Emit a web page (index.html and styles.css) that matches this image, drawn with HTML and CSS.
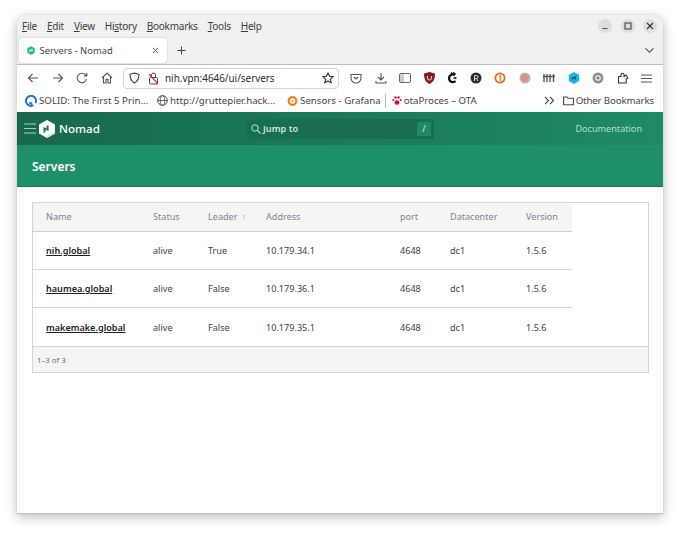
FILE: index.html
```html
<!DOCTYPE html>
<html lang="en">
<head>
    <meta charset="UTF-8">
    <title>Servers - Nomad</title>
    <link rel="stylesheet" href="styles.css">
</head>
<body>
    <div class="window">
        <div class="menubar">
            <div class="menus">
                <span><u>F</u>ile</span>
                <span><u>E</u>dit</span>
                <span><u>V</u>iew</span>
                <span>Hi<u>s</u>tory</span>
                <span><u>B</u>ookmarks</span>
                <span><u>T</u>ools</span>
                <span><u>H</u>elp</span>
            </div>
            <div class="winbtns">
                <span class="winbtn"><svg width="8" height="8" viewBox="0 0 8 8"><path d="M1.500 6.500h5" stroke="#555" stroke-width="1.100"/></svg></span>
                <span class="winbtn"><svg width="8" height="8" viewBox="0 0 8 8"><rect x="1" y="1" width="6" height="6" fill="none" stroke="#444" stroke-width="1.100"/></svg></span>
                <span class="winbtn"><svg width="8" height="8" viewBox="0 0 8 8"><path d="M1 1l6 6M7 1L1 7" stroke="#333" stroke-width="1.200"/></svg></span>
            </div>
        </div>

        <div class="tabbar">
            <div class="tab">
                <svg class="favicon" width="8" height="9" viewBox="0 0 11 12"><path d="M5.500 0L10.500 3v6L5.500 12 .5 9V3z" fill="#1fb58f"/><path d="M4 4v4M7 4v4M4 8l3-4" stroke="#fff" stroke-width="1"/></svg>
                <span class="tabtitle">Servers - Nomad</span>
                <svg class="tabclose" width="7" height="7" viewBox="0 0 8 8"><path d="M1 1l6 6M7 1L1 7" stroke="#555" stroke-width="1"/></svg>
            </div>
            <svg class="newtab" width="9" height="9" viewBox="0 0 11 11"><path d="M5.500 .5v10M.5 5.500h10" stroke="#444" stroke-width="1.300"/></svg>
            <svg class="tabmenu" width="11" height="7" viewBox="0 0 12 8"><path d="M1.500 1.500L6 6l4.500-4.500" fill="none" stroke="#444" stroke-width="1.200"/></svg>
        </div>

        <div class="navbar">
            <div class="navbtns">
                <svg width="12" height="12" viewBox="0 0 12 12"><path d="M11 6H1.500M5.500 2L1.500 6l4 4" fill="none" stroke="#555" stroke-width="1.100"/></svg>
                <svg width="12" height="12" viewBox="0 0 12 12"><path d="M1 6h9.500M6.500 2l4 4-4 4" fill="none" stroke="#555" stroke-width="1.100"/></svg>
                <svg width="12" height="12" viewBox="0 0 12 12"><path d="M10.500 7a4.700 4.700 0 1 1-1.200-4.300L10.800 4M10.800 .8V4H7.600" fill="none" stroke="#555" stroke-width="1.100"/></svg>
                <svg width="12" height="12" viewBox="0 0 12 12"><path d="M1 6l5-5 5 5M2.500 5v6h2.500V7.500h2V11h2.500V5" fill="none" stroke="#555" stroke-width="1.100"/></svg>
            </div>
            <div class="urlbar">
                <svg width="11" height="12" viewBox="0 0 11 12"><path d="M5.500 1L10 2.300c0 4.500-1.500 7.200-4.500 8.700C2.500 9.500 1 6.800 1 2.300z" fill="none" stroke="#333" stroke-width="1.100"/></svg>
                <svg class="lock" width="11" height="13" viewBox="0 0 11 13"><rect x="1.500" y="5.500" width="8" height="6.500" rx="1" fill="none" stroke="#444"/><path d="M3.500 5.500V3a2 2 0 0 1 4 0v2.500" fill="none" stroke="#444"/><path d="M1 2l9 10" stroke="#e22850" stroke-width="1.200"/></svg>
                <span class="url">nih.vpn:4646/ui/servers</span>
                <svg class="star" width="12" height="12" viewBox="0 0 12 12"><path d="M6 1l1.500 3.300 3.500.4-2.600 2.400.7 3.600L6 8.900l-3.100 1.800.7-3.600L1 4.700l3.500-.4z" fill="none" stroke="#333" stroke-width="1.100"/></svg>
            </div>
            <div class="addons">
                <svg width="12" height="11" viewBox="0 0 12 11"><path d="M1 1.500h10v3.500a5 5 0 0 1-10 0z" fill="none" stroke="#555" stroke-width="1.100"/><path d="M3.800 4L6 6l2.200-2" fill="none" stroke="#555" stroke-width="1.100"/></svg>
                <svg width="12" height="12" viewBox="0 0 12 12"><path d="M6 1v6.500M3 5l3 3 3-3M1 9v2h10V9" fill="none" stroke="#555" stroke-width="1.100"/></svg>
                <svg width="12" height="10" viewBox="0 0 12 10"><rect x=".5" y=".5" width="11" height="9" rx="1.500" fill="none" stroke="#666"/><rect x="1" y="1" width="4" height="8" fill="#ccc"/></svg>
                <svg width="11" height="12" viewBox="0 0 11 12"><path d="M5.500 0L11 1.500c0 6-1.500 8.500-5.500 10.500C1.500 10 0 7.500 0 1.500z" fill="#8c1c1c"/><path d="M3.500 4v2a2 2 0 0 0 4 0V4" fill="none" stroke="#eee" stroke-width=".9"/></svg>
                <svg width="10" height="12" viewBox="0 0 10 12"><path d="M8 3.200A3.800 3.800 0 1 0 8.500 9" fill="none" stroke="#111" stroke-width="2.300"/><path d="M6 .5l2.500 1.500M4 .5l1.500 2M6.500 6h3" stroke="#111" stroke-width="1.400"/></svg>
                <svg width="12" height="12" viewBox="0 0 12 12"><circle cx="6" cy="6" r="5.500" fill="#2b2b2b"/><path d="M4.500 9V3.500h2a1.500 1.500 0 0 1 0 3h-2M6.500 6.500L8 9" fill="none" stroke="#ddd" stroke-width="1"/></svg>
                <svg width="12" height="12" viewBox="0 0 12 12"><circle cx="6" cy="6" r="5.500" fill="#e8622d"/><circle cx="6" cy="6" r="3.700" fill="#fff"/><path d="M5 2.800h2.200l.3 6.400H5.800z" fill="#e8a03a"/></svg>
                <svg width="12" height="12" viewBox="0 0 12 12"><circle cx="6" cy="6" r="5.500" fill="#b5b5b5"/><circle cx="6" cy="6" r="3.700" fill="#e2907c"/></svg>
                <svg width="12" height="10" viewBox="0 0 12 10"><path d="M1 1v8M4 1v8M7 1v8M10.500 1v8M0 3.500h12" stroke="#555" stroke-width="1.400"/></svg>
                <svg width="12" height="12" viewBox="0 0 12 12"><path d="M6 0l5.200 3v6L6 12 .8 9V3z" fill="#16b4e8"/><path d="M3.500 7L8 4.500M6 6.500l2 .5" stroke="#173a4a" stroke-width="1.200"/></svg>
                <svg width="12" height="12" viewBox="0 0 12 12"><circle cx="6" cy="6" r="5.500" fill="#8e8e8e"/><circle cx="6" cy="6" r="3" fill="#d8d8d8"/><circle cx="6" cy="6" r="1.300" fill="#777"/></svg>
                <svg width="12" height="12" viewBox="0 0 12 12"><path d="M1.500 11V4.500h2.500V2.700a1.500 1.500 0 0 1 3 0v1.800L9 3l2 3-1.800 1v4z" fill="none" stroke="#333" stroke-width="1.100"/></svg>
                <svg width="11" height="9" viewBox="0 0 11 9"><path d="M0 1h11M0 4.500h11M0 8h11" stroke="#555" stroke-width="1.100"/></svg>
            </div>
        </div>

        <div class="bookmarks">
            <span class="bm"><svg width="12" height="12" viewBox="0 0 12 12"><path d="M8.500 10.200A5 5 0 1 1 11 6a4.500 4.500 0 0 1-.5 2" fill="none" stroke="#1a73d9" stroke-width="2"/><path d="M4 8h2.500v2.500" fill="none" stroke="#1a73d9" stroke-width="1.500"/></svg>SOLID: The First 5 Prin…</span>
            <span class="bm bm-wide"><svg width="11" height="11" viewBox="0 0 11 11"><circle cx="5.500" cy="5.500" r="4.800" fill="none" stroke="#444"/><ellipse cx="5.500" cy="5.500" rx="2.200" ry="4.800" fill="none" stroke="#444" stroke-width=".8"/><path d="M.7 5.500h9.600" stroke="#444" stroke-width=".8"/></svg>http://gruttepier.hack…</span>
            <span class="bm"><svg width="11" height="12" viewBox="0 0 11 12"><circle cx="5.500" cy="6" r="3.800" fill="none" stroke="#ee7b22" stroke-width="2.200"/><circle cx="5.500" cy="6" r="1.300" fill="#f6b73c"/></svg>Sensors - Grafana</span>
            <span class="bmsep"></span>
            <span class="bm"><svg width="10" height="11" viewBox="0 0 10 11"><ellipse cx="5" cy="7.500" rx="2.500" ry="2.300" fill="#c4163a"/><circle cx="1.300" cy="5" r="1.100" fill="#c4163a"/><circle cx="3.500" cy="2.500" r="1.200" fill="#c4163a"/><circle cx="6.500" cy="2.500" r="1.200" fill="#c4163a"/><circle cx="8.700" cy="5" r="1.100" fill="#c4163a"/></svg>otaProces – OTA</span>
            <svg class="chevrons" width="11" height="9" viewBox="0 0 11 9"><path d="M1 .8l3.500 3.700L1 8.200M6 .8l3.500 3.700L6 8.200" fill="none" stroke="#444" stroke-width="1.100"/></svg>
            <span class="bm"><svg width="11" height="10" viewBox="0 0 11 10"><path d="M.6 8.800V1h3.300l1.200 1.300h5.300v6.500z" fill="none" stroke="#444" stroke-width="1.100"/></svg>Other Bookmarks</span>
        </div>

        <div class="page">
            <header class="topnav">
                <svg class="burger" width="12" height="11" viewBox="0 0 12 11"><path d="M0 1h12M0 5.500h12M0 10h12" stroke="#9fd6bd" stroke-width="1.200"/></svg>
                <svg class="logo" width="16" height="18" viewBox="0 0 16 18"><path d="M8 0l8 4.500v9L8 18l-8-4.500v-9z" fill="#fff"/><path d="M4.500 7v6l2-1V9.500l3 1.500V5l-2 1v2.500z" fill="#1b6f52"/><path d="M11 14l5-2.500v2L8 18v-2z" fill="#cfe3da"/></svg>
                <span class="brand">Nomad</span>
                <div class="search">
                    <svg width="10" height="10" viewBox="0 0 10 10"><circle cx="4" cy="4" r="3.200" fill="none" stroke="#bfe0d1" stroke-width="1"/><path d="M6.400 6.400L9.500 9.500" stroke="#bfe0d1" stroke-width="1.100"/></svg>
                    <span class="jump">Jump to</span>
                    <span class="slash">/</span>
                </div>
                <a class="doclink">Documentation</a>
            </header>
            <div class="subnav">Servers</div>

            <section class="content">
                <div class="tablebox">
                    <table class="servers">
                        <colgroup>
                            <col class="c-name"><col class="c-status"><col class="c-leader"><col class="c-addr"><col class="c-port"><col class="c-dc"><col class="c-ver">
                        </colgroup>
                        <thead>
                            <tr>
                                <th>Name</th>
                                <th>Status</th>
                                <th>Leader <span class="sort">↑</span></th>
                                <th>Address</th>
                                <th>port</th>
                                <th>Datacenter</th>
                                <th>Version</th>
                            </tr>
                        </thead>
                        <tbody>
                            <tr>
                                <td><a class="srv">nih.global</a></td>
                                <td>alive</td><td>True</td><td>10.179.34.1</td><td>4648</td><td>dc1</td><td>1.5.6</td>
                            </tr>
                            <tr>
                                <td><a class="srv">haumea.global</a></td>
                                <td>alive</td><td>False</td><td>10.179.36.1</td><td>4648</td><td>dc1</td><td>1.5.6</td>
                            </tr>
                            <tr>
                                <td><a class="srv">makemake.global</a></td>
                                <td>alive</td><td>False</td><td>10.179.35.1</td><td>4648</td><td>dc1</td><td>1.5.6</td>
                            </tr>
                        </tbody>
                    </table>
                    <div class="pager">1–3 of 3</div>
                </div>
            </section>
        </div>
    </div>
</body>
</html>
```
FILE: styles.css
```css
*{
    padding: 0;
    margin: 0;
    box-sizing: border-box;
}

html, body{
    height: 100%;
}
body{
    background-color: #fff;
    font-family: "Noto Sans", sans-serif;
    padding: 15px 17px 0 17px;
}
svg{
    display: block;
    flex: none;
}
.window{
    width: 646px;
    height: 499px;
    background-color: #fff;
    border-radius: 9px 9px 0 0;
    overflow: hidden;
    border-bottom: 1px solid #c4c4c4;
    box-shadow: 0 0 1px #999, 0 3px 12px rgba(0,0,0,.26);
}
.menubar{
    height: 23px;
    background-color: #f0f0f0;
    display: flex;
    align-items: center;
    justify-content: space-between;
    padding: 0 6px 2px 5px;
}
.menus{
    display: flex;
    gap: 10px;
    font-size: 10px;
    letter-spacing: -.25px;
    color: #3d3d3d;
}
.winbtns{
    display: flex;
    gap: 8.500px;
    margin-top: 1px;
}
.winbtn{
    width: 14px;
    height: 14px;
    border-radius: 50%;
    background-color: #dedede;
    display: flex;
    align-items: center;
    justify-content: center;
}
.tabbar{
    height: 27px;
    background-color: #f0f0f0;
    display: flex;
    align-items: center;
    padding: 0 8px 2px 2px;
    border-bottom: 1px solid #bdbdbd;
}
.tab{
    width: 148px;
    height: 25px;
    background-color: #fff;
    border-radius: 4px;
    box-shadow: 0 0 2px #bbb;
    display: flex;
    align-items: center;
    padding: 0 8px 0 7.500px;
    font-size: 9.400px;
    color: #444;
}
.tabtitle{
    margin-left: 5px;
    flex: 1;
}
.newtab{
    margin-left: 10px;
}
.tabmenu{
    margin-left: auto;
}
.navbar{
    height: 26px;
    background-color: #fff;
    display: flex;
    align-items: center;
    padding: 0 11px 0 10px;
}
.navbtns{
    display: flex;
    gap: 12.500px;
    width: 96px;
}
.urlbar{
    width: 216px;
    height: 21px;
    border: 1px solid #d4d4d4;
    border-radius: 4px;
    display: flex;
    align-items: center;
    padding: 0 4px 0 5px;
}
.lock{
    margin-left: 8px;
}
.url{
    margin-left: 6px;
    font-size: 9.900px;
    color: #2b2b2b;
    flex: 1;
}
.addons{
    display: flex;
    align-items: center;
    justify-content: space-between;
    flex: 1;
    margin-left: 11px;
}
.bookmarks{
    height: 21px;
    background-color: #fff;
    display: flex;
    align-items: center;
    padding: 0 9px 2px 8px;
    font-size: 9.700px;
    color: #444;
}
.bm{
    display: flex;
    align-items: center;
    gap: 2px;
    margin-right: 9px;
    white-space: nowrap;
}
.bm-wide{
    margin-right: 12px;
}
.bmsep{
    width: 1px;
    height: 14px;
    background-color: #bbb;
    margin: 0 6px 0 -5px;
}
.chevrons{
    margin-left: auto;
    margin-right: 8px;
}
.bookmarks .bm:last-child{
    margin-right: 0;
    letter-spacing: -.15px;
}
.page{
    background-color: #fff;
}
.topnav{
    height: 33px;
    background-color: #1f8a65;
    background-image: linear-gradient(90deg, #17694d, #1f8a65);
    display: flex;
    align-items: center;
    padding: 0 21px 0 7px;
}
.logo{
    margin-left: 3px;
}
.brand{
    margin-left: 4px;
    color: #fff;
    font-size: 11.600px;
    font-weight: 500;
    width: 188px;
}
.search{
    width: 187px;
    height: 20px;
    background-color: #186e50;
    display: flex;
    align-items: center;
    padding: 0 3px 0 4px;
    color: #cfe8dc;
    font-size: 9.200px;
    font-weight: 600;
}
.jump{
    margin-left: 2px;
    flex: 1;
}
.slash{
    width: 14px;
    height: 14px;
    background-color: #1f8a65;
    text-align: center;
    line-height: 14px;
    font-weight: 400;
}
.doclink{
    margin-left: auto;
    color: #b4e0cc;
    font-size: 9.100px;
}
.subnav{
    height: 42px;
    background-color: #1f8f69;
    border-bottom: 1px solid #1a7a59;
    display: flex;
    align-items: center;
    padding: 1px 0 0 15px;
    color: #fff;
    font-size: 12px;
    font-weight: 600;
}
.content{
    padding: 15px 14px 0 15px;
}
.tablebox{
    border: 1px solid #d3d5da;
    height: 171px;
    display: flex;
    flex-direction: column;
}
.servers{
    border-collapse: collapse;
    table-layout: fixed;
    width: 539px;
    font-size: 9.100px;
    color: #3e3e3e;
}
.c-name{ width: 107px; }
.c-status{ width: 55px; }
.c-leader{ width: 58px; }
.c-addr{ width: 134px; }
.c-port{ width: 50px; }
.c-dc{ width: 76px; }
.c-ver{ width: 59px; }
.servers th{
    height: 28px;
    background-color: #f5f5f6;
    border-bottom: 1px solid #cfd1d6;
    text-align: left;
    font-weight: 400;
    color: #80848a;
    padding-left: 13px;
}
.servers td{
    height: 38.400px;
    padding-left: 13px;
    border-bottom: 1px solid #d3d5da;
}
.servers tbody tr:last-child td{
    border-bottom: none;
}
.sort{
    color: #b0b3b8;
    margin-left: 2px;
}
.srv{
    color: #222;
    font-weight: 600;
    text-decoration: underline;
}
.pager{
    margin-top: auto;
    height: 27px;
    background-color: #f4f4f5;
    border-top: 1px solid #d3d5da;
    display: flex;
    align-items: center;
    padding-left: 4px;
    font-size: 7.800px;
    color: #6b6f75;
}
```
